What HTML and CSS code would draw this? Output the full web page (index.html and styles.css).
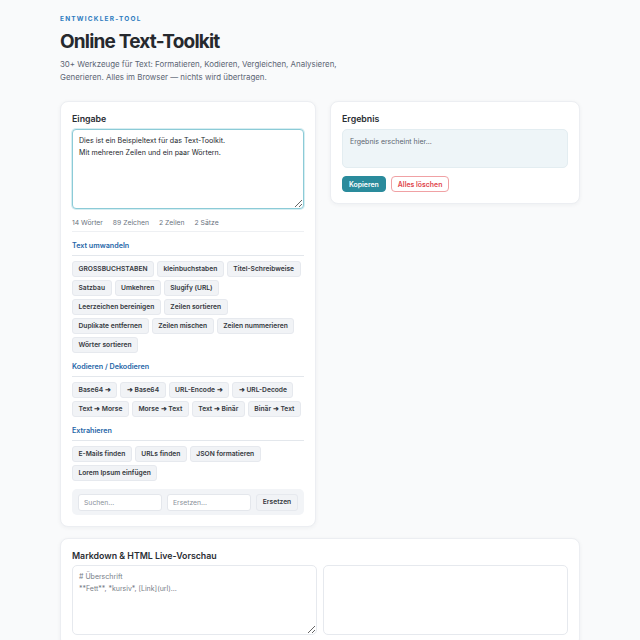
FILE: index.html
```html
<!DOCTYPE html>
<html lang="de">
<head>
    <meta charset="utf-8">
    <title>Online Text-Toolkit</title>
    <link rel="stylesheet" href="styles.css">
</head>
<body>
<div class="page">
    <div class="eyebrow">ENTWICKLER-TOOL</div>
    <h1 class="title">Online Text-Toolkit</h1>
    <p class="lead">30+ Werkzeuge für Text: Formatieren, Kodieren, Vergleichen, Analysieren,<br>Generieren. Alles im Browser — nichts wird übertragen.</p>

    <div class="grid">
        <div class="card">
            <h2 class="card_title">Eingabe</h2>
            <textarea class="input-area">Dies ist ein Beispieltext für das Text-Toolkit.
Mit mehreren Zeilen und ein paar Wörtern.</textarea>
            <div class="stats">
                <span>14 Wörter</span>
                <span>89 Zeichen</span>
                <span>2 Zeilen</span>
                <span>2 Sätze</span>
            </div>

            <div class="section">Text umwandeln</div>
            <div class="btns">
                <button class="tool">GROSSBUCHSTABEN</button>
                <button class="tool">kleinbuchstaben</button>
                <button class="tool">Titel-Schreibweise</button>
                <button class="tool">Satzbau</button>
                <button class="tool">Umkehren</button>
                <button class="tool">Slugify (URL)</button>
                <button class="tool">Leerzeichen bereinigen</button>
                <button class="tool">Zeilen sortieren</button>
                <button class="tool">Duplikate entfernen</button>
                <button class="tool">Zeilen mischen</button>
                <button class="tool">Zeilen nummerieren</button>
                <button class="tool">Wörter sortieren</button>
            </div>

            <div class="section">Kodieren / Dekodieren</div>
            <div class="btns">
                <button class="tool">Base64 ➜</button>
                <button class="tool">➜ Base64</button>
                <button class="tool">URL-Encode ➜</button>
                <button class="tool">➜ URL-Decode</button>
                <button class="tool">Text ➜ Morse</button>
                <button class="tool">Morse ➜ Text</button>
                <button class="tool">Text ➜ Binär</button>
                <button class="tool">Binär ➜ Text</button>
            </div>

            <div class="section">Extrahieren</div>
            <div class="btns">
                <button class="tool">E-Mails finden</button>
                <button class="tool">URLs finden</button>
                <button class="tool">JSON formatieren</button>
                <button class="tool">Lorem Ipsum einfügen</button>
            </div>

            <div class="replace">
                <input class="replace_input" type="text" placeholder="Suchen...">
                <input class="replace_input" type="text" placeholder="Ersetzen...">
                <button class="tool replace_btn">Ersetzen</button>
            </div>
        </div>

        <div class="card">
            <h2 class="card_title">Ergebnis</h2>
            <div class="result">Ergebnis erscheint hier...</div>
            <div class="actions">
                <button class="btn-primary">Kopieren</button>
                <button class="btn-danger">Alles löschen</button>
            </div>
        </div>
    </div>

    <div class="card card-wide">
        <h2 class="card_title">Markdown &amp; HTML Live-Vorschau</h2>
        <div class="preview">
            <textarea class="md-area" placeholder="# Überschrift
**Fett**, *kursiv*, [Link](url)..."></textarea>
            <div class="md-out"></div>
        </div>
    </div>
</div>
</body>
</html>
```

FILE: styles.css
```css
* {
    box-sizing: border-box;
}

html, body {
    margin: 0;
    background-color: #f9fafb;
    color: #2b2f36;
    font-family: 'Inter', 'Noto Sans', sans-serif;
}

.page {
    width: 580px;
    padding: 15px 0 0 60px;
}

.eyebrow {
    font-size: 6.5px;
    line-height: 8px;
    font-weight: 700;
    letter-spacing: 1.2px;
    color: #2f7cc0;
}

.title {
    margin: 7px 0 0;
    font-size: 19px;
    font-weight: 700;
    letter-spacing: -0.8px;
    color: #26292e;
    line-height: 24px;
}

.lead {
    margin: 4px 0 0;
    font-size: 7.9px;
    line-height: 13px;
    color: #5b6573;
}

.grid {
    display: grid;
    grid-template-columns: 256px 250px;
    gap: 14px;
    align-items: start;
    margin-top: 17px;
}

.card {
    background-color: #fff;
    border: 1px solid #eceef2;
    border-radius: 8px;
    box-shadow: 0 1px 4px rgba(20, 30, 50, 0.05);
    padding: 10px 11px 11px;
}

.card_title {
    margin: 0 0 3px;
    font-size: 8.8px;
    font-weight: 600;
    line-height: 14px;
    color: #2a2d33;
}

.input-area {
    display: block;
    width: 100%;
    height: 80px;
    padding: 5px 6px;
    border: 1px solid #8ccbd7;
    border-radius: 4px;
    box-shadow: 0 0 0 1px #d7eef2;
    font-family: inherit;
    font-size: 7.1px;
    line-height: 12px;
    color: #24272c;
    resize: vertical;
    outline: none;
}

.stats {
    display: flex;
    gap: 10px;
    margin-top: 6px;
    padding: 3px 0 4px;
    border-bottom: 1px solid #eef0f3;
    font-size: 6.8px;
    color: #6c7480;
}

.section {
    margin-top: 9px;
    padding-bottom: 5px;
    border-bottom: 1px solid #e3e7ec;
    font-size: 7.2px;
    line-height: 9px;
    font-weight: 600;
    color: #1f66a8;
}

.btns {
    display: flex;
    flex-wrap: wrap;
    gap: 3px;
    margin-top: 5px;
}

.tool {
    height: 16px;
    padding: 0 5.5px;
    background-color: #f1f3f6;
    border: 1px solid #e6e9ee;
    border-radius: 3px;
    font-family: inherit;
    font-size: 6.7px;
    font-weight: 600;
    color: #343840;
}

.replace {
    display: flex;
    gap: 5px;
    margin-top: 8px;
    padding: 4px 6px;
    height: 26px;
    align-items: center;
    background-color: #f2f4f7;
    border-radius: 5px;
}

.replace_input {
    flex: 0 0 84px;
    width: 84px;
    height: 17px;
    padding: 0 5px;
    border: 1px solid #e4e7ec;
    border-radius: 3px;
    background-color: #fff;
    font-family: inherit;
    font-size: 6.8px;
    outline: none;
}

.replace_input::placeholder {
    color: #8a919b;
}

.replace_btn {
    height: 17px;
    flex: 1;
}

.result {
    height: 39px;
    padding: 7px 7px;
    background-color: #eef5f8;
    border: 1px solid #e3edf1;
    border-radius: 5px;
    font-size: 7px;
    color: #5c6570;
}

.actions {
    display: flex;
    gap: 5px;
    margin-top: 8px;
}

.btn-primary {
    height: 16px;
    padding: 0 6px;
    background-color: #2a8b9c;
    border: 1px solid #2a8b9c;
    border-radius: 4px;
    font-family: inherit;
    font-size: 6.9px;
    font-weight: 600;
    color: #fff;
}

.btn-danger {
    height: 16px;
    padding: 0 6px;
    background-color: #fff;
    border: 1px solid #f0a1a4;
    border-radius: 4px;
    font-family: inherit;
    font-size: 6.9px;
    font-weight: 600;
    color: #e0454c;
}

.card-wide {
    width: 520px;
    margin-top: 11px;
}

.card-wide .card_title {
    margin-bottom: 2px;
}

.preview {
    display: grid;
    grid-template-columns: 1fr 1fr;
    gap: 6px;
}

.md-area {
    display: block;
    width: 100%;
    height: 70px;
    padding: 5px 6px;
    border: 1px solid #e6e9ee;
    border-radius: 5px;
    font-family: inherit;
    font-size: 7px;
    line-height: 12px;
    resize: vertical;
    outline: none;
}

.md-area::placeholder {
    color: #767d87;
}

.md-out {
    height: 70px;
    border: 1px solid #e6e9ee;
    border-radius: 5px;
}
```
